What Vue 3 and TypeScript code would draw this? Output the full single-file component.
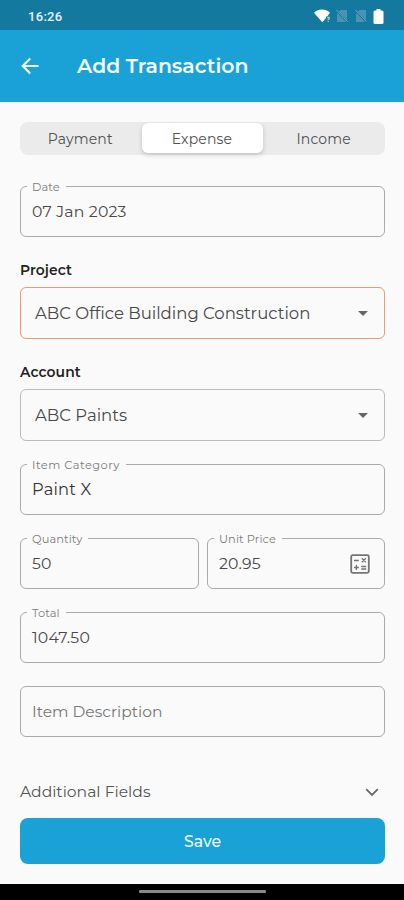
<script setup lang="ts">
import { ref } from 'vue'

type Kind = 'Payment' | 'Expense' | 'Income'

const kinds: Kind[] = ['Payment', 'Expense', 'Income']
const active = ref<Kind>('Expense')
const project = ref('ABC Office Building Construction')
const account = ref('ABC Paints')
</script>

<template>
  <div class="screen">
    <div class="status">
      <span class="clock">16:26</span>
      <div class="indicators">
        <svg class="wifi" viewBox="0 0 17 14" width="17" height="14">
          <path d="M0 3.800C4.500 -0.600 11.500 -0.600 16 3.800L13.200 7.500H12V9L8.250 13.200Z" fill="#fff" />
          <path d="M13 8.300h2.200v1.600h-1v1M14.200 11.800v1.200" fill="none" stroke="#a5d0df" stroke-width="1.100" />
        </svg>
        <svg v-for="n in 2" :key="n" class="sim" viewBox="0 0 12 14" width="12" height="14">
          <path d="M4.500 1H11V13H1V4.500Z" fill="#4a94b1" />
          <path d="M0.500 1.500L11.500 13" stroke="#14799f" stroke-width="2" />
          <path d="M0.500 1L11.500 12.500" stroke="#78afc4" stroke-width="0.900" />
        </svg>
        <svg class="battery" viewBox="0 0 11 15" width="11" height="15">
          <path d="M3.500 0h4v1.500h1.500a1.500 1.500 0 0 1 1.500 1.500v10.500a1.500 1.500 0 0 1-1.500 1.500h-7a1.500 1.500 0 0 1-1.500-1.500v-10.500a1.500 1.500 0 0 1 1.500-1.500h1.500z" fill="#fff" />
        </svg>
      </div>
    </div>

    <header class="appbar">
      <svg class="back" viewBox="0 0 18 18" width="18" height="18">
        <path d="M17.500 9H2M9.200 1.500L1.700 9L9.200 16.500" fill="none" stroke="#f4fbfe" stroke-width="2.100" />
      </svg>
      <h1 class="title">Add Transaction</h1>
    </header>

    <main class="form">
      <div class="tabs">
        <button
          v-for="kind in kinds"
          :key="kind"
          type="button"
          class="tab"
          :class="{ selected: kind === active }"
          @click="active = kind"
        >{{ kind }}</button>
      </div>

      <div class="field">
        <span class="label">Date</span>
        <span class="value">07 Jan 2023</span>
      </div>

      <div class="group">
        <span class="heading">Project</span>
        <div class="select accent">
          <span class="choice">{{ project }}</span>
          <svg viewBox="0 0 10 5" width="10" height="5"><path d="M0 0H10L5 5Z" fill="#666" /></svg>
        </div>
      </div>

      <div class="group">
        <span class="heading">Account</span>
        <div class="select">
          <span class="choice">{{ account }}</span>
          <svg viewBox="0 0 10 5" width="10" height="5"><path d="M0 0H10L5 5Z" fill="#666" /></svg>
        </div>
      </div>

      <div class="stack">
        <div class="field">
          <span class="label wide">Item Category</span>
          <span class="value category">Paint X</span>
        </div>
        <div class="pair">
          <div class="field quantity">
            <span class="label">Quantity</span>
            <span class="value">50</span>
          </div>
          <div class="field price">
            <span class="label">Unit Price</span>
            <span class="value">20.95</span>
            <svg class="calc" viewBox="0 0 20 20" width="20" height="20">
              <rect x="1.200" y="1.200" width="17.600" height="17.600" rx="1.500" fill="none" stroke="#747474" stroke-width="1.800" />
              <path d="M4 6.500H8.800M4 13.500H8.800M6.400 11.100V15.900M11.300 12.500H16.200M11.300 15H16.200M11.800 4.300L15.800 8.300M15.800 4.300L11.800 8.300" fill="none" stroke="#747474" stroke-width="1.300" />
            </svg>
          </div>
        </div>
        <div class="field">
          <span class="label">Total</span>
          <span class="value">1047.50</span>
        </div>
        <div class="field">
          <span class="value placeholder">Item Description</span>
        </div>
      </div>

      <div class="more">
        <span>Additional Fields</span>
        <svg viewBox="0 0 14 9" width="14" height="9">
          <path d="M1.200 1.200L7 7L12.800 1.200" fill="none" stroke="#686868" stroke-width="1.800" />
        </svg>
      </div>

      <button type="button" class="save">Save</button>
    </main>

    <div class="navbar"><span class="handle"></span></div>
  </div>
</template>

<style>
body {
  background: #fafafa;
}
</style>

<style scoped>
.screen {
  width: 404px;
  height: 900px;
  display: flex;
  flex-direction: column;
  overflow: hidden;
  background: #fafafa;
  color: #484848;
  font-family: Montserrat, Inter, sans-serif;
}
.screen * {
  box-sizing: border-box;
}
.status {
  flex: none;
  height: 30px;
  padding: 2px 20px 0 28px;
  display: flex;
  align-items: center;
  justify-content: space-between;
  background: #14799f;
}
.clock {
  font: 500 13px Roboto, sans-serif;
  letter-spacing: 0.3px;
  color: #e6f4f9;
}
.indicators {
  display: flex;
  align-items: center;
  gap: 7px;
}
.wifi {
  margin-right: -2px;
}
.battery {
  margin-left: -1px;
}
.appbar {
  flex: none;
  height: 72px;
  padding: 0 21px;
  display: flex;
  align-items: center;
  gap: 38px;
  background: #1aa2d6;
}
.title {
  margin: 0;
  font-size: 20.4px;
  font-weight: 600;
  line-height: 28px;
  color: #f7fcfe;
}
.form {
  flex: none;
  height: 782px;
  padding: 20px 19px 20px 20px;
  display: flex;
  flex-direction: column;
}
.tabs {
  flex: none;
  height: 33px;
  display: grid;
  grid-template-columns: repeat(3, 1fr);
  border-radius: 8px;
  background: #ebebeb;
}
.tab {
  margin: 1px 0 2px;
  padding: 1px 1px 0 0;
  border: 0;
  border-radius: 6px;
  background: transparent;
  color: #505050;
  font: inherit;
  font-size: 14px;
  letter-spacing: 0.15px;
}
.tab.selected {
  background: #fff;
  box-shadow: 0 2px 5px rgba(0, 0, 0, 0.18);
}
.tabs + .field {
  margin-top: 31px;
}
.field {
  flex: none;
  position: relative;
  height: 51px;
  padding: 0 11px;
  display: flex;
  align-items: center;
  border: 1px solid #aaa;
  border-radius: 6px;
}
.label {
  position: absolute;
  top: -7px;
  left: 6px;
  padding: 0 6px 0 5px;
  background: #fafafa;
  color: #7c7c7c;
  font-size: 11.4px;
  line-height: 14px;
  letter-spacing: 0.1px;
}
.label.wide {
  letter-spacing: 0.5px;
}
.value {
  font-size: 15.7px;
  line-height: 20px;
  letter-spacing: 0.2px;
}
.category {
  margin-top: -2px;
  font-size: 16.3px;
  color: #333;
}
.placeholder {
  font-size: 15.5px;
  letter-spacing: 0;
  color: #777;
}
.group {
  flex: none;
  margin-top: 23px;
  display: flex;
  flex-direction: column;
  gap: 7px;
}
.heading {
  font-size: 13.9px;
  font-weight: 600;
  line-height: 20px;
  letter-spacing: 0.1px;
  color: #222;
}
.select {
  height: 52px;
  padding: 0 16px 0 14px;
  display: flex;
  align-items: center;
  justify-content: space-between;
  border: 1px solid #bbb;
  border-radius: 6px;
}
.select.accent {
  border-color: #eb9b76;
}
.choice {
  font-size: 16.5px;
}
.stack {
  flex: none;
  margin-top: 23px;
  display: flex;
  flex-direction: column;
  gap: 23px;
}
.pair {
  display: flex;
  gap: 8px;
}
.quantity {
  width: 179px;
}
.price {
  flex: 1;
  justify-content: space-between;
  padding-right: 14px;
}
.more {
  margin-top: auto;
  padding-right: 6px;
  display: flex;
  align-items: center;
  justify-content: space-between;
  font-size: 15.6px;
  line-height: 20px;
  color: #555;
}
.save {
  flex: none;
  height: 46px;
  margin-top: 16px;
  padding: 0;
  border: 0;
  border-radius: 8px;
  background: #1aa2d6;
  color: #eef9fd;
  font: inherit;
  font-size: 15.7px;
  font-weight: 500;
}
.navbar {
  flex: none;
  height: 16px;
  display: flex;
  justify-content: center;
  align-items: flex-start;
  padding-top: 6px;
  background: #000;
}
.handle {
  width: 127px;
  height: 3px;
  border-radius: 1px;
  background: #888;
}
</style>
